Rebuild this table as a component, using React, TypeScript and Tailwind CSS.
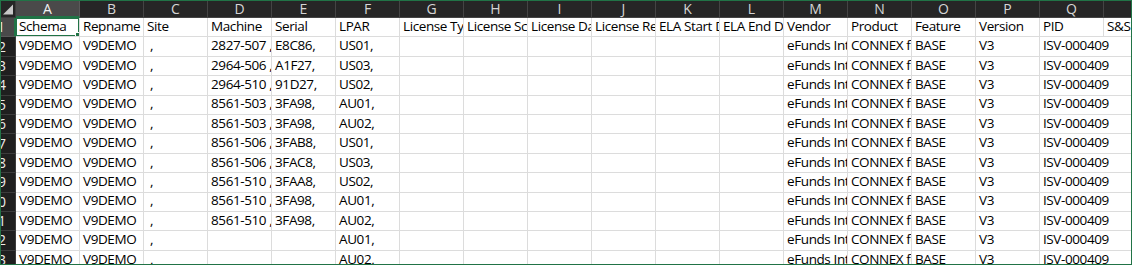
const columns = ['A', 'B', 'C', 'D', 'E', 'F', 'G', 'H', 'I', 'J', 'K', 'L', 'M', 'N', 'O', 'P', 'Q', 'R'];

const header = [
  'Schema', 'Repname', 'Site', 'Machine', 'Serial', 'LPAR', 'License Type', 'License Scope',
  'License Date', 'License Renewal', 'ELA Start Date', 'ELA End Date', 'Vendor', 'Product',
  'Feature', 'Version', 'PID', 'S&S Level',
];

const machines = ['2827-507', '2964-506', '2964-510', '8561-503', '8561-503', '8561-506', '8561-506', '8561-510', '8561-510', '8561-510', '', ''];
const serials = ['E8C86,', 'A1F27,', '91D27,', '3FA98,', '3FA98,', '3FAB8,', '3FAC8,', '3FAA8,', '3FA98,', '3FA98,', '', ''];
const lpars = ['US01,', 'US03,', 'US02,', 'AU01,', 'AU02,', 'US01,', 'US03,', 'US02,', 'AU01,', 'AU02,', 'AU01,', 'AU02,'];

const rows: string[][] = [
  header,
  ...machines.map((m, i) => [
    'V9DEMO', 'V9DEMO', ' ,', m ? m + ' ,' + m : '', serials[i], lpars[i],
    '', '', '', '', '', '',
    'eFunds International', 'CONNEX for HP NonStop', 'BASE', 'V3', 'ISV-000409', '',
  ]),
];

const App = () => {
  return (
    <div className="w-[1135px] h-[267px] bg-white overflow-hidden" style={{ fontFamily: '"Open Sans", "Noto Sans", sans-serif' }}>
      <div className="w-[1132px] h-[265px] border border-[#217346] overflow-hidden">
        <div className="grid grid-cols-[15px_repeat(18,64px)] grid-rows-[17px_repeat(13,19.4px)] w-max">
          {/* corner */}
          <div className="bg-[#262626] border-r border-b border-[#3c3c3c] flex items-end justify-end p-[2px]">
            <svg width="11" height="11" viewBox="0 0 11 11">
              <polygon points="11,0 11,11 0,11" fill="#c8c8c8" />
            </svg>
          </div>
          {columns.map((c, i) => (
            <div
              key={c}
              className={
                i === 0
                  ? 'bg-[#4a4a4a] border-r border-[#5a5a5a] border-b-2 border-b-[#217346] text-[#f0f0f0] text-[14px] leading-none flex items-center justify-center'
                  : 'bg-[#262626] border-r border-b border-[#444444] text-[#d6d6d6] text-[14px] leading-none flex items-center justify-center'
              }
            >
              {c}
            </div>
          ))}

          {rows.map((r, ri) => (
            <Row key={ri} index={ri + 1} cells={r} />
          ))}
        </div>
      </div>
    </div>
  );
};

const Row = ({ index, cells }: { index: number; cells: string[] }) => {
  const selected = index === 1;
  return (
    <>
      <div
        className={
          selected
            ? 'bg-[#4a4a4a] border-r-2 border-r-[#217346] border-b border-b-[#5a5a5a] text-[#f0f0f0] text-[14px] leading-none flex items-center justify-end pr-[9px] overflow-hidden whitespace-nowrap'
            : 'bg-[#1f1f1f] border-r border-b border-[#3c3c3c] text-[#ececec] text-[14px] leading-none flex items-center justify-end pr-[9px] overflow-hidden whitespace-nowrap'
        }
      >
        <span>{index}</span>
      </div>
      {cells.map((text, ci) => {
        // PID spills into the empty column beside it, as Excel does
        const spill = ci === 16 && !selected;
        return (
          <div
            key={ci}
            className={
              spill
                ? 'relative z-10 border-b border-[#dcdcdc] text-[13.5px] tracking-[-0.4px] leading-none text-black pl-[3px] pb-[3px] flex items-end whitespace-pre'
                : 'relative border-r border-b border-[#dcdcdc] text-[13.5px] tracking-[-0.4px] leading-none text-black pl-[3px] pb-[3px] flex items-end overflow-hidden whitespace-pre'
            }
          >
            {text}
            {selected && ci === 0 && (
              <>
                <div className="absolute inset-[-1px] border-2 border-[#217346] pointer-events-none" />
                <div className="absolute right-[-2px] bottom-[-2px] w-[6px] h-[6px] bg-[#217346] border border-white" />
              </>
            )}
          </div>
        );
      })}
    </>
  );
};

export default App;
